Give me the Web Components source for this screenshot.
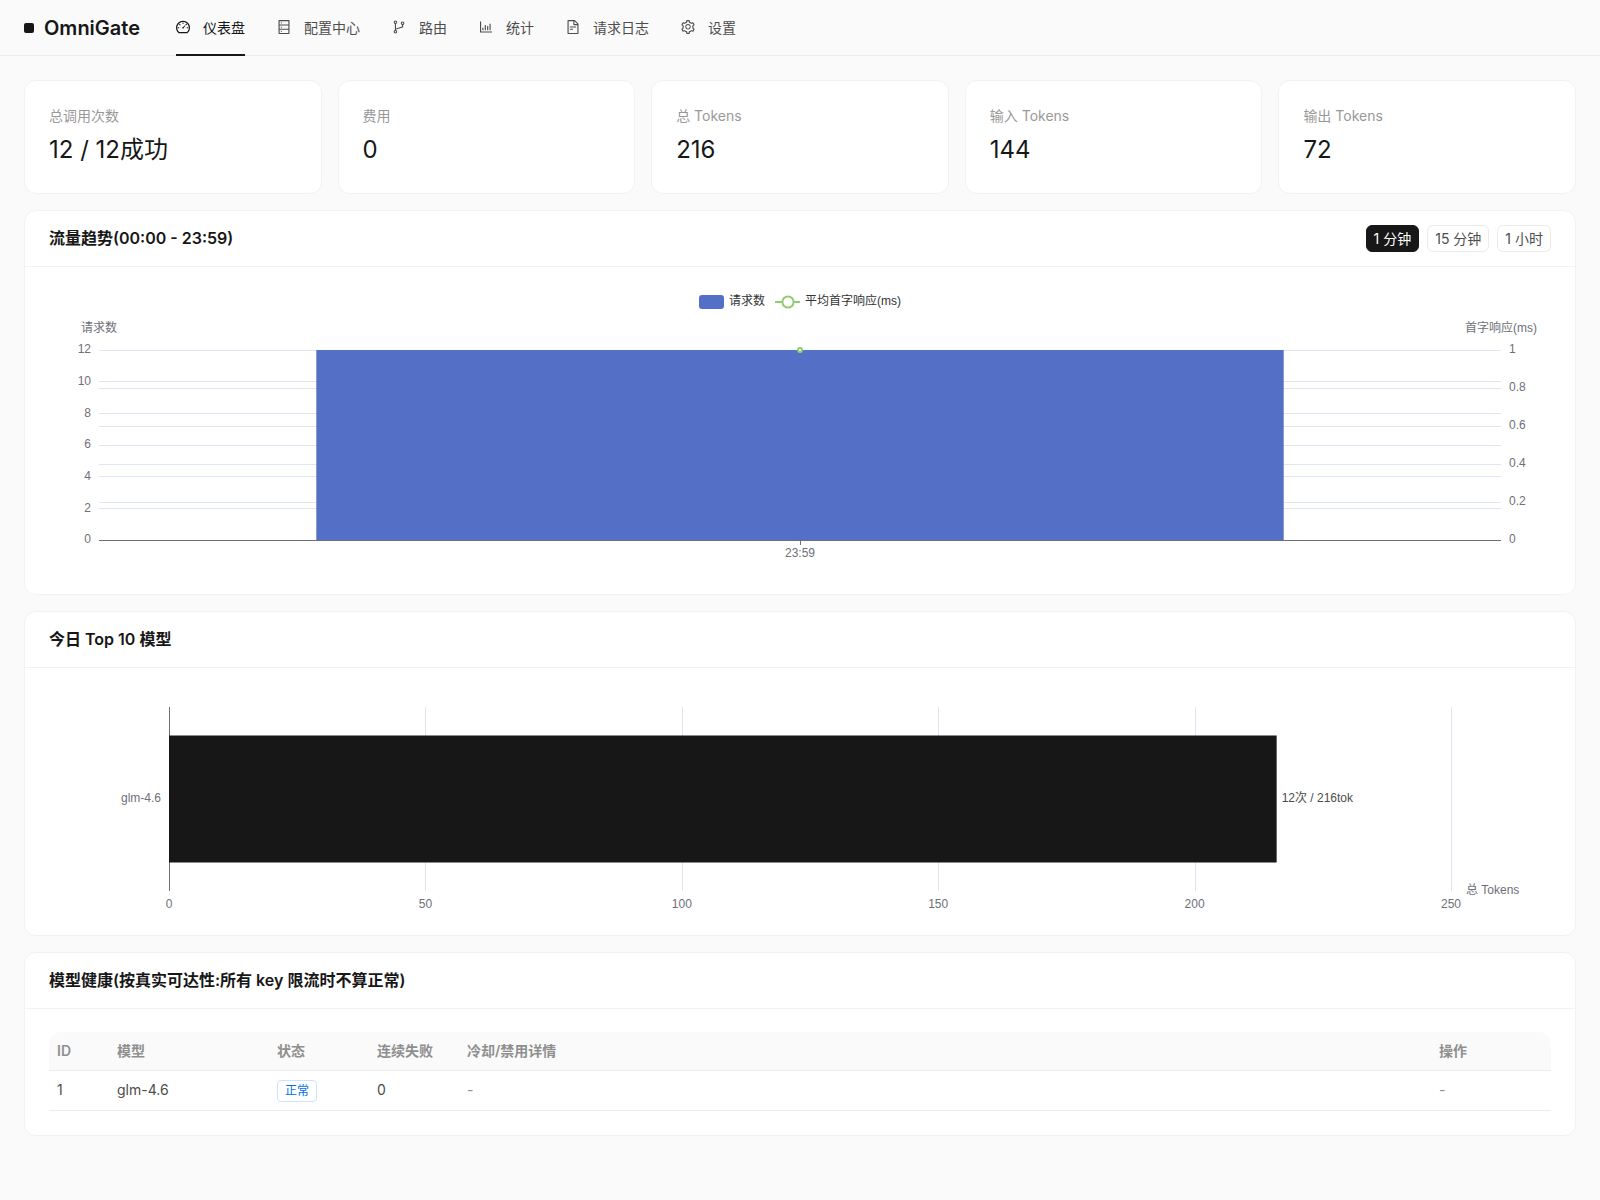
<!DOCTYPE html>
<html lang="zh-CN">
<head>
<meta charset="utf-8">
<meta name="viewport" content="width=device-width, initial-scale=1">
<title>OmniGate</title>
<style>
  :root {
    --ink: #171717;
    --text: #4d4d4d;
    --muted: #999999;
    --line: #ebebeb;
    --line-soft: #f2f2f2;
    --surface: #ffffff;
    --page: #fafafa;
    --chart-font: "Liberation Sans", "Noto Sans CJK SC", sans-serif;
  }
  body {
    margin: 0;
    min-height: 100vh;
    background: var(--page);
    color: var(--ink);
    font: 14px/22px Inter, "Noto Sans CJK SC", sans-serif;
  }
</style>
</head>
<body>
<omni-app></omni-app>

<script>
const ICONS = {
  dashboard: 'M924.8 385.6a446.7 446.7 0 00-96-142.4 446.7 446.7 0 00-142.4-96C631.1 123.8 572.5 112 512 112s-119.1 11.8-174.4 35.2a446.7 446.7 0 00-142.4 96 446.7 446.7 0 00-96 142.4C75.8 440.9 64 499.5 64 560c0 132.7 58.3 257.7 159.9 343.1l1.7 1.4c5.8 4.8 13.1 7.5 20.6 7.5h531.7c7.5 0 14.8-2.7 20.6-7.5l1.7-1.4C901.7 817.7 960 692.7 960 560c0-60.5-11.9-119.1-35.2-174.4zM761.4 836H262.6A371.12 371.12 0 01140 560c0-99.4 38.7-192.8 109-263 70.3-70.3 163.7-109 263-109 99.4 0 192.8 38.7 263 109 70.3 70.3 109 163.7 109 263 0 105.6-44.5 205.5-122.6 276zM623.5 421.5a8.03 8.03 0 00-11.3 0L527.7 506c-18.7-5-39.4-.2-54.1 14.5a55.95 55.95 0 000 79.2 55.95 55.95 0 0079.2 0 55.87 55.87 0 0014.5-54.1l84.5-84.5c3.1-3.1 3.1-8.2 0-11.3l-28.3-28.3zM490 320h44c4.4 0 8-3.6 8-8v-80c0-4.4-3.6-8-8-8h-44c-4.4 0-8 3.6-8 8v80c0 4.4 3.6 8 8 8zm260 218v44c0 4.4 3.6 8 8 8h80c4.4 0 8-3.6 8-8v-44c0-4.4-3.6-8-8-8h-80c-4.4 0-8 3.6-8 8zm12.7-197.2l-31.1-31.1a8.03 8.03 0 00-11.3 0l-56.6 56.6a8.03 8.03 0 000 11.3l31.1 31.1c3.1 3.1 8.2 3.1 11.3 0l56.6-56.6c3.1-3.1 3.1-8.2 0-11.3zm-458.6-31.1a8.03 8.03 0 00-11.3 0l-31.1 31.1a8.03 8.03 0 000 11.3l56.6 56.6c3.1 3.1 8.2 3.1 11.3 0l31.1-31.1c3.1-3.1 3.1-8.2 0-11.3l-56.6-56.6zM262 530h-80c-4.4 0-8 3.6-8 8v44c0 4.4 3.6 8 8 8h80c4.4 0 8-3.6 8-8v-44c0-4.4-3.6-8-8-8z',
  database: 'M832 64H192c-17.7 0-32 14.3-32 32v832c0 17.7 14.3 32 32 32h640c17.7 0 32-14.3 32-32V96c0-17.7-14.3-32-32-32zm-600 72h560v208H232V136zm560 480H232V408h560v208zm0 272H232V680h560v208zM304 240a40 40 0 1080 0 40 40 0 10-80 0zm0 272a40 40 0 1080 0 40 40 0 10-80 0zm0 272a40 40 0 1080 0 40 40 0 10-80 0z',
  branches: 'M740 161c-61.8 0-112 50.2-112 112 0 50.1 33.1 92.6 78.5 106.9v95.9L320 602.4V318.1c44.2-15 76-56.9 76-106.1 0-61.8-50.2-112-112-112s-112 50.2-112 112c0 49.2 31.8 91 76 106.1V706c-44.2 15-76 56.9-76 106.1 0 61.8 50.2 112 112 112s112-50.2 112-112c0-49.2-31.8-91-76-106.1v-27.8l423.5-138.7a50.52 50.52 0 0034.9-48.2V378.2c42.9-15.8 73.6-57 73.6-105.2 0-61.8-50.2-112-112-112zm-504 51a48.01 48.01 0 0196 0 48.01 48.01 0 01-96 0zm96 600a48.01 48.01 0 01-96 0 48.01 48.01 0 0196 0zm408-491a48.01 48.01 0 010-96 48.01 48.01 0 010 96z',
  bars: 'M888 792H200V168c0-4.4-3.6-8-8-8h-56c-4.4 0-8 3.6-8 8v688c0 4.4 3.6 8 8 8h752c4.4 0 8-3.6 8-8v-56c0-4.4-3.6-8-8-8zm-600-80h56c4.4 0 8-3.6 8-8V560c0-4.4-3.6-8-8-8h-56c-4.4 0-8 3.6-8 8v144c0 4.4 3.6 8 8 8zm152 0h56c4.4 0 8-3.6 8-8V384c0-4.4-3.6-8-8-8h-56c-4.4 0-8 3.6-8 8v320c0 4.4 3.6 8 8 8zm152 0h56c4.4 0 8-3.6 8-8V462c0-4.4-3.6-8-8-8h-56c-4.4 0-8 3.6-8 8v242c0 4.4 3.6 8 8 8zm152 0h56c4.4 0 8-3.6 8-8V304c0-4.4-3.6-8-8-8h-56c-4.4 0-8 3.6-8 8v400c0 4.4 3.6 8 8 8z',
  file: 'M854.6 288.6L639.4 73.4c-6-6-14.1-9.4-22.6-9.4H192c-17.7 0-32 14.3-32 32v832c0 17.7 14.3 32 32 32h640c17.7 0 32-14.3 32-32V311.3c0-8.5-3.4-16.7-9.4-22.7zM790.2 326H602V137.8L790.2 326zm1.8 562H232V136h302v216a42 42 0 0042 42h216v494zM504 618H320c-4.4 0-8 3.6-8 8v48c0 4.4 3.6 8 8 8h184c4.4 0 8-3.6 8-8v-48c0-4.4-3.6-8-8-8zM312 490v48c0 4.4 3.6 8 8 8h384c4.4 0 8-3.6 8-8v-48c0-4.4-3.6-8-8-8H320c-4.4 0-8 3.6-8 8z',
  setting: 'M924.8 625.7l-65.5-56c3.1-19 4.7-38.4 4.7-57.8s-1.6-38.8-4.7-57.8l65.5-56a32.03 32.03 0 009.3-35.2l-.9-2.6a443.74 443.74 0 00-79.7-137.9l-1.8-2.1a32.12 32.12 0 00-35.1-9.5l-81.3 28.9c-30-24.6-63.5-44-99.7-57.6l-15.7-85a32.05 32.05 0 00-25.8-25.7l-2.7-.5c-52.1-9.4-106.9-9.4-159 0l-2.7.5a32.05 32.05 0 00-25.8 25.7l-15.8 85.4a351.86 351.86 0 00-99 57.4l-81.9-29.1a32 32 0 00-35.1 9.5l-1.8 2.1a446.02 446.02 0 00-79.7 137.9l-.9 2.6c-4.5 12.5-.8 26.5 9.3 35.2l66.3 56.6c-3.1 18.8-4.6 38-4.6 57.1 0 19.2 1.5 38.4 4.6 57.1L99 625.5a32.03 32.03 0 00-9.3 35.2l.9 2.6c18.1 50.4 44.9 96.9 79.7 137.9l1.8 2.1a32.12 32.12 0 0035.1 9.5l81.9-29.1c29.8 24.5 63.1 43.9 99 57.4l15.8 85.4a32.05 32.05 0 0025.8 25.7l2.7.5a449.4 449.4 0 00159 0l2.7-.5a32.05 32.05 0 0025.8-25.7l15.7-85a350 350 0 0099.7-57.6l81.3 28.9a32 32 0 0035.1-9.5l1.8-2.1c34.8-41.1 61.6-87.5 79.7-137.9l.9-2.6c4.5-12.3.8-26.3-9.3-35zM788.3 465.9c2.5 15.1 3.8 30.6 3.8 46.1s-1.3 31-3.8 46.1l-6.6 40.1 74.7 63.9a370.03 370.03 0 01-42.6 73.6L721 702.8l-31.4 25.8c-23.9 19.6-50.5 35-79.3 45.8l-38.1 14.3-17.9 97a377.5 377.5 0 01-85 0l-17.9-97.2-37.8-14.5c-28.5-10.8-55-26.2-78.7-45.7l-31.4-25.9-93.4 33.2c-17-22.9-31.2-47.6-42.6-73.6l75.5-64.5-6.5-40c-2.4-14.9-3.7-30.3-3.7-45.5 0-15.3 1.2-30.6 3.7-45.5l6.5-40-75.5-64.5c11.3-26.1 25.6-50.7 42.6-73.6l93.4 33.2 31.4-25.9c23.7-19.5 50.2-34.9 78.7-45.7l37.9-14.3 17.9-97.2c28.1-3.2 56.8-3.2 85 0l17.9 97 38.1 14.3c28.7 10.8 55.4 26.2 79.3 45.8l31.4 25.8 92.8-32.9c17 22.9 31.2 47.6 42.6 73.6L781.8 426l6.5 39.9zM512 326c-97.2 0-176 78.8-176 176s78.8 176 176 176 176-78.8 176-176-78.8-176-176-176zm79.2 255.2A111.6 111.6 0 01512 614c-29.9 0-58-11.7-79.2-32.8A111.6 111.6 0 01400 502c0-29.9 11.7-58 32.8-79.2C454 401.6 482.1 390 512 390c29.9 0 58 11.6 79.2 32.8A111.6 111.6 0 01624 502c0 29.9-11.7 58-32.8 79.2z'
};

/* Base class: puts the class's own markup into an open shadow root. */
class OmniElement extends HTMLElement {
  connectedCallback() {
    if (this.shadowRoot) return;
    const t = document.createElement('template');
    t.innerHTML = this.template();
    this.attachShadow({ mode: 'open' }).append(t.content.cloneNode(true));
    this.ready();
  }
  ready() {}
}

class OmniNavItem extends OmniElement {
  template() {
    const active = this.hasAttribute('active');
    return `
    <style>
      :host { display: block; }
      a {
        display: block; line-height: 53px;
        border-bottom: 2px solid transparent; color: var(--text);
        text-decoration: none; white-space: nowrap;
      }
      a[aria-current] { color: var(--ink); border-bottom-color: var(--ink); }
      svg { width: 14px; height: 14px; margin-right: 13px; vertical-align: -1px; }
    </style>
    <a href="#"${active ? ' aria-current="page"' : ''}><svg viewBox="64 64 896 896" fill="currentColor" aria-hidden="true"><path d="${ICONS[this.getAttribute('icon')]}"/></svg><slot></slot></a>`;
  }
}

class OmniHeader extends OmniElement {
  template() { return `
    <style>
      :host { display: block; border-bottom: 1px solid var(--line); background: var(--page); }
      header { display: flex; align-items: center; gap: 36px; height: 55px; padding: 0 24px; }
      .brand {
        display: flex; align-items: center; gap: 10px;
        font-size: 20px; line-height: 28px; font-weight: 600; white-space: nowrap;
      }
      .mark { width: 10px; height: 10px; border-radius: 2px; background: var(--ink); }
      nav { display: flex; gap: 32px; margin-bottom: -1px; }
    </style>
    <header>
      <div class="brand"><span class="mark"></span><span>OmniGate</span></div>
      <nav><slot></slot></nav>
    </header>`; }
}

class OmniStat extends OmniElement {
  template() { return `
    <style>
      :host {
        display: block; flex: 1 1 0; min-width: 0; box-sizing: border-box; padding: 24px;
        background: var(--surface); border: 1px solid var(--line-soft); border-radius: 12px;
      }
      .label { color: var(--muted); margin-bottom: 4px; }
      .value { font-size: 24px; line-height: 38px; }
    </style>
    <div class="label">${this.getAttribute('label')}</div>
    <div class="value"><slot></slot></div>`; }
}

class OmniCard extends OmniElement {
  template() { return `
    <style>
      :host {
        display: block; background: var(--surface);
        border: 1px solid var(--line-soft); border-radius: 12px;
      }
      header {
        display: flex; align-items: center; justify-content: space-between;
        box-sizing: border-box; height: 56px; margin-bottom: -1px; padding: 0 24px;
        border-bottom: 1px solid var(--line-soft);
      }
      h2 { margin: 0; padding-bottom: 1px; font-size: 16px; line-height: 24px; font-weight: 600; }
      .body { padding: 24px; }
    </style>
    <section>
      <header><h2>${this.getAttribute('heading')}</h2><slot name="extra"></slot></header>
      <div class="body"><slot></slot></div>
    </section>`; }
}

class OmniRange extends OmniElement {
  template() { return `
    <style>
      :host { display: flex; gap: 8px; }
      button {
        box-sizing: border-box; height: 27px; padding: 0 7px; margin: 0;
        border: 1px solid var(--line); border-radius: 6px; background: var(--surface);
        color: var(--text); font: inherit; line-height: 22px; cursor: pointer;
      }
      button[aria-pressed="true"] { background: var(--ink); border-color: var(--ink); color: #fff; }
    </style>
    <button type="button" aria-pressed="true">1 分钟</button>
    <button type="button" aria-pressed="false">15 分钟</button>
    <button type="button" aria-pressed="false">1 小时</button>`; }
  ready() {
    const buttons = [...this.shadowRoot.querySelectorAll('button')];
    for (const b of buttons) b.addEventListener('click', () => {
      for (const o of buttons) o.setAttribute('aria-pressed', String(o === b));
    });
  }
}

/* Base class of the charts: redraws its SVG whenever the element's width changes. */
class OmniChart extends OmniElement {
  template() { return `
    <style>
      :host { display: block; height: ${this.chartHeight}px; }
      svg { display: block; width: 100%; height: 100%; font: 12px var(--chart-font); fill: #6e7079; }
      .grid { stroke: #e0e6f1; fill: none; }
      .axis { stroke: #6e7079; fill: none; }
      .dark { fill: #333; }
      .value { fill: #4d4d4d; }
      .end { text-anchor: end; }
      .mid { text-anchor: middle; }
    </style>
    <svg role="img" aria-label="${this.getAttribute('label')}"></svg>`; }
  ready() {
    this.svg = this.shadowRoot.querySelector('svg');
    const paint = () => { this.svg.innerHTML = this.draw(this.clientWidth); };
    paint();
    new ResizeObserver(paint).observe(this);
  }
}

class OmniTrendChart extends OmniChart {
  get chartHeight() { return 280; }
  draw(w) {
    const l = 50, r = w - 50, top = 60, bottom = 250, h = bottom - top, mid = w / 2;
    const lineY = v => Math.floor(v) + 0.5;
    let s = '';
    for (let i = 0; i <= 6; i++) {
      const y = bottom - h * i / 6;
      if (i) s += `<path class="grid" d="M${l} ${lineY(y)}H${r}"/>`;
      s += `<text class="end" x="${l - 8}" y="${Math.round(y + 3.4)}">${i * 2}</text>`;
    }
    for (let i = 0; i <= 5; i++) {
      const y = bottom - h * i / 5;
      if (i) s += `<path class="grid" d="M${l} ${lineY(y)}H${r}"/>`;
      s += `<text x="${r + 8}" y="${Math.round(y + 3.4)}">${i * 2 / 10}</text>`;
    }
    const bw = (r - l) * 0.69;
    s += `<rect x="${mid - bw / 2}" y="${top}" width="${bw}" height="${h}" fill="#5470c6"/>`;
    s += `<path class="axis" d="M${l} ${bottom + 0.5}H${r}M${Math.floor(mid) + 0.5} ${bottom}v5"/>`;
    s += `<circle cx="${mid}" cy="${top}" r="2" fill="#fff" stroke="#91cc75" stroke-width="2"/>`;
    s += `<text class="mid" x="${mid}" y="267">23:59</text>`;
    s += `<text class="mid" x="${l}" y="42">请求数</text><text class="mid" x="${r}" y="42">首字响应(ms)</text>`;
    const k = Math.round(mid) - 101;
    s += `<rect x="${k}" y="5" width="25" height="14" rx="3" fill="#5470c6"/>
      <text class="dark" x="${k + 30}" y="15">请求数</text>
      <path d="M${k + 76} 12h25" stroke="#91cc75" stroke-width="2"/>
      <circle cx="${k + 89}" cy="12" r="5.6" fill="#fff" stroke="#91cc75" stroke-width="2"/>
      <text class="dark" x="${k + 106}" y="15">平均首字响应(ms)</text>`;
    return s;
  }
}

class OmniModelChart extends OmniChart {
  get chartHeight() { return 220; }
  draw(w) {
    const l = 120, r = w - 100, top = 16, bottom = 200;
    const x = v => l + (r - l) * v / 250;
    let s = '';
    for (let v = 0; v <= 250; v += 50) {
      if (v) s += `<path class="grid" d="M${Math.round(x(v)) + 0.5} ${top}V${bottom}"/>`;
      s += `<text class="mid" x="${x(v)}" y="217">${v}</text>`;
    }
    s += `<path class="axis" d="M${l + 0.5} ${top}V${bottom}"/>`;
    s += `<rect x="${l}" y="44.5" width="${x(216) - l}" height="127" fill="#171717"/>`;
    s += `<text class="end" x="${l - 8}" y="111">glm-4.6</text>`;
    s += `<text class="value" x="${x(216) + 5}" y="111">12次 / 216tok</text>`;
    s += `<text x="${r + 15}" y="203">总 Tokens</text>`;
    return s;
  }
}

class OmniHealthTable extends OmniElement {
  template() { return `
    <style>
      :host { display: block; }
      table { width: 100%; table-layout: fixed; border-collapse: separate; border-spacing: 0; }
      th, td {
        padding: 8px; text-align: left; vertical-align: top;
        border-bottom: 1px solid var(--line); white-space: nowrap;
      }
      th { background: var(--page); color: #8f8f8f; font-weight: 600; }
      th:first-child { border-top-left-radius: 12px; }
      th:last-child { border-top-right-radius: 12px; }
      td { color: var(--text); }
      .none { color: #8f8f8f; }
      .tag {
        display: inline-block; margin-top: 1px; padding: 0 7px;
        border: 1px solid #cce3ff; border-radius: 4px;
        color: #0070f3; font-size: 12px; line-height: 20px; vertical-align: top;
      }
      .id { width: 60px; } .model { width: 160px; } .state { width: 100px; }
      .fails { width: 90px; } .ops { width: 120px; }
    </style>
    <table>
      <colgroup><col class="id"><col class="model"><col class="state"><col class="fails"><col><col class="ops"></colgroup>
      <thead><tr><th>ID</th><th>模型</th><th>状态</th><th>连续失败</th><th>冷却/禁用详情</th><th>操作</th></tr></thead>
      <tbody><tr><td>1</td><td>glm-4.6</td><td><span class="tag">正常</span></td><td>0</td><td class="none">-</td><td class="none">-</td></tr></tbody>
    </table>`; }
}

class OmniApp extends OmniElement {
  template() { return `
    <style>
      :host { display: block; }
      main { display: flex; flex-direction: column; gap: 16px; padding: 24px; }
      .stats { display: flex; gap: 16px; }
    </style>
    <omni-header>
      <omni-nav-item icon="dashboard" active>仪表盘</omni-nav-item>
      <omni-nav-item icon="database">配置中心</omni-nav-item>
      <omni-nav-item icon="branches">路由</omni-nav-item>
      <omni-nav-item icon="bars">统计</omni-nav-item>
      <omni-nav-item icon="file">请求日志</omni-nav-item>
      <omni-nav-item icon="setting">设置</omni-nav-item>
    </omni-header>
    <main>
      <div class="stats">
        <omni-stat label="总调用次数">12 / 12成功</omni-stat>
        <omni-stat label="费用">0</omni-stat>
        <omni-stat label="总 Tokens">216</omni-stat>
        <omni-stat label="输入 Tokens">144</omni-stat>
        <omni-stat label="输出 Tokens">72</omni-stat>
      </div>
      <omni-card heading="流量趋势(00:00 - 23:59)">
        <omni-range slot="extra"></omni-range>
        <omni-trend-chart label="流量趋势"></omni-trend-chart>
      </omni-card>
      <omni-card heading="今日 Top 10 模型">
        <omni-model-chart label="今日 Top 10 模型"></omni-model-chart>
      </omni-card>
      <omni-card heading="模型健康(按真实可达性:所有 key 限流时不算正常)">
        <omni-health-table></omni-health-table>
      </omni-card>
    </main>`; }
}

customElements.define('omni-nav-item', OmniNavItem);
customElements.define('omni-header', OmniHeader);
customElements.define('omni-stat', OmniStat);
customElements.define('omni-card', OmniCard);
customElements.define('omni-range', OmniRange);
customElements.define('omni-trend-chart', OmniTrendChart);
customElements.define('omni-model-chart', OmniModelChart);
customElements.define('omni-health-table', OmniHealthTable);
customElements.define('omni-app', OmniApp);
</script>
</body>
</html>
